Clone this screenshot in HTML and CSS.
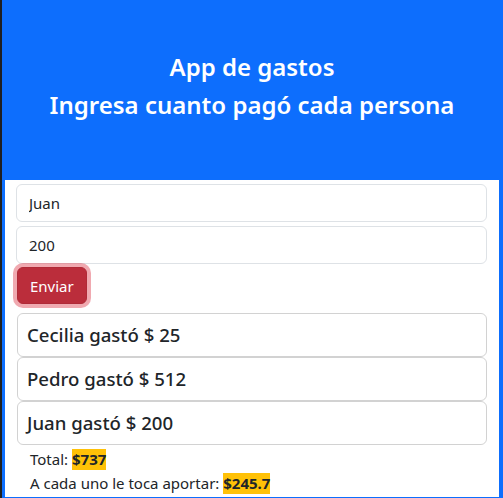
FILE: index.html
```html
<!DOCTYPE html>
<html lang="es">
<head>
<meta charset="utf-8">
<title>App de gastos</title>
<link rel="stylesheet" href="styles.css">
</head>
<body>
<div class="frame">
  <header class="hero">
    <h1 class="hero-title">App de gastos</h1>
    <h2 class="hero-sub">Ingresa cuanto pagó cada persona</h2>
  </header>
  <main class="panel">
    <form class="form">
      <input class="field" type="text" value="Juan">
      <input class="field" type="text" value="200">
      <button class="btn" type="button">Enviar</button>
    </form>
    <ul class="list">
      <li class="item">Cecilia gastó $ 25</li>
      <li class="item">Pedro gastó $ 512</li>
      <li class="item">Juan gastó $ 200</li>
    </ul>
    <div class="summary">
      <p class="line">Total: <mark class="amount">$737</mark></p>
      <p class="line">A cada uno le toca aportar: <mark class="amount">$245.7</mark></p>
    </div>
  </main>
</div>
</body>
</html>
```
FILE: styles.css
```css
* { box-sizing: border-box; }
html, body { margin: 0; padding: 0; }
body {
  font-family: "Noto Sans", "Open Sans", sans-serif;
  color: #212529;
  background: #0d6efd;
}
.frame {
  height: 498px;
  overflow: hidden;
  border-left: 2px solid #1f1f1f;
  padding: 0 4px 1px 3px;
  display: flex;
  flex-direction: column;
  background: #0d6efd;
}
.hero {
  height: 180px;
  flex: none;
  display: flex;
  flex-direction: column;
  align-items: center;
  justify-content: center;
  color: #fff;
  padding-bottom: 9px;
}
.hero-title, .hero-sub {
  margin: 0;
  font-size: 24px;
  font-weight: 600;
  line-height: 29px;
}
.hero-title { margin-bottom: 9px; }
.panel {
  flex: 1;
  background: #fff;
  padding: 4px 12px 0 11px;
  overflow: hidden;
}
.form {
  display: flex;
  flex-direction: column;
  align-items: flex-start;
  gap: 4px;
  margin: 0;
}
.field {
  width: 100%;
  height: 38px;
  border: 1px solid #dee2e6;
  border-radius: 6px;
  padding: 6px 12px;
  font: inherit;
  font-size: 15px;
  color: #212529;
}
.btn {
  margin: -1px 0 0 1px;
  height: 37px;
  padding: 5px 12px;
  font: inherit;
  font-size: 15px;
  color: #fff;
  background: #bb2d3b;
  border: 1px solid #b02a37;
  border-radius: 6px;
  box-shadow: 0 0 0 4px rgba(225, 83, 97, 0.5);
}
.list {
  list-style: none;
  margin: 9px 0 0 1px;
  padding: 0;
}
.item {
  height: 44px;
  border: 1px solid rgba(0, 0, 0, 0.175);
  border-radius: 6px;
  padding: 9px 9px;
  font-size: 18.6px;
  font-weight: 500;
  line-height: 24px;
}
.summary {
  padding: 2px 0 0 14px;
}
.line {
  margin: 0;
  font-size: 15px;
  line-height: 24px;
}
.amount {
  background: #ffc107;
  color: #212529;
  font-weight: 700;
  padding: 0 0 1px;
}
```
